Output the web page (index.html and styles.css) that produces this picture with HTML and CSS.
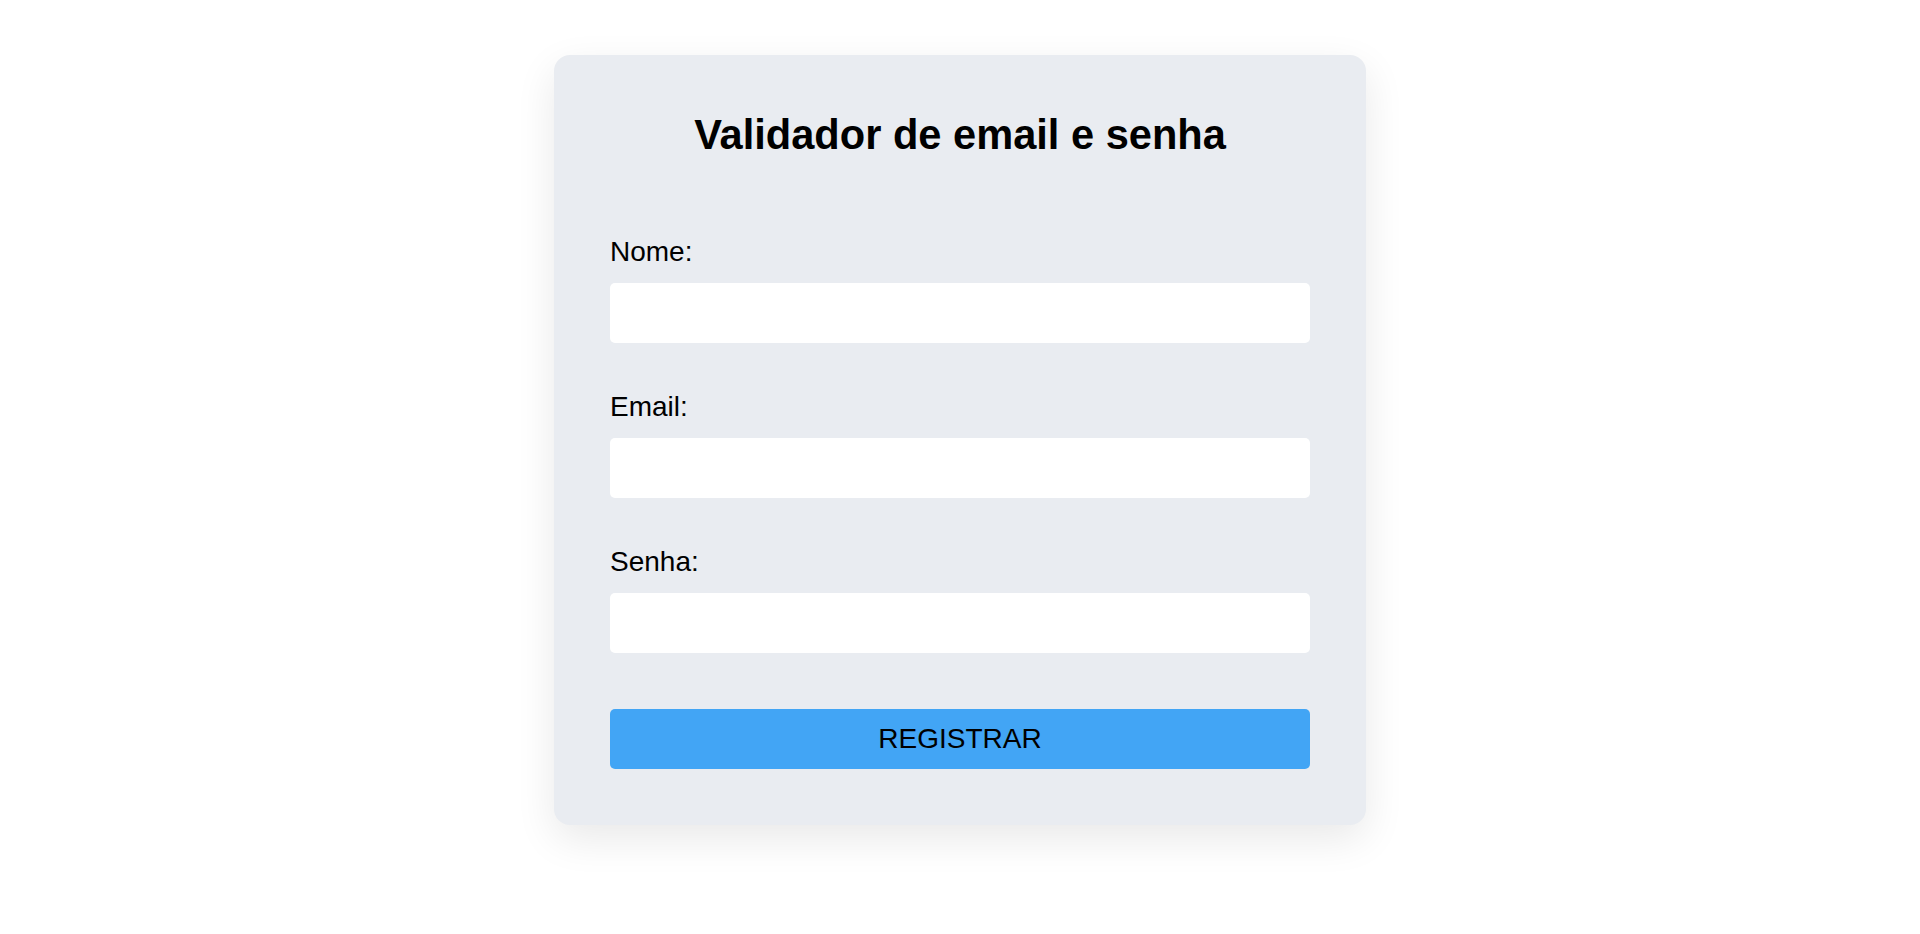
FILE: index.html
```html
<!DOCTYPE html>
<html lang="pt-BR">
<head>
<meta charset="UTF-8">
<title>Validador de email e senha</title>
<link rel="stylesheet" href="styles.css">
</head>
<body>
<main class="card">
  <h1 class="title">Validador de email e senha</h1>
  <form class="form">
    <div class="field">
      <label class="label" for="nome">Nome:</label>
      <input class="input" id="nome" type="text">
    </div>
    <div class="field">
      <label class="label" for="email">Email:</label>
      <input class="input" id="email" type="email">
    </div>
    <div class="field">
      <label class="label" for="senha">Senha:</label>
      <input class="input" id="senha" type="password">
    </div>
    <button class="button" type="button">REGISTRAR</button>
  </form>
</main>
</body>
</html>
```

FILE: styles.css
```css
* { box-sizing: border-box; }
html, body {
  margin: 0;
  padding: 0;
  background: #ffffff;
  font-family: "Liberation Sans", Arial, sans-serif;
  color: #000;
}
body {
  min-height: 100vh;
  padding: 55px 0 60px;
}
.card {
  width: 812px;
  margin: 0 auto;
  padding: 56px;
  background: #e9ecf1;
  border-radius: 16px;
  box-shadow: 0 14px 40px rgba(0, 0, 0, 0.09);
}
.title {
  margin: 0;
  font-size: 41.6px;
  font-weight: bold;
  line-height: normal;
  text-align: center;
}
.form {
  display: flex;
  flex-direction: column;
  margin-top: 77px;
}
.field {
  display: flex;
  flex-direction: column;
  margin-bottom: 48px;
}
.field:last-of-type { margin-bottom: 56px; }
.label {
  font-size: 28px;
  line-height: normal;
  margin-bottom: 15px;
}
.input {
  height: 60px;
  border: none;
  border-radius: 5px;
  background: #ffffff;
  font-size: 28px;
  padding: 0 16px;
  outline: none;
}
.button {
  height: 60px;
  border: none;
  border-radius: 5px;
  background: #42a5f5;
  color: #000;
  font-family: "Liberation Sans", Arial, sans-serif;
  font-size: 28px;
  cursor: pointer;
}
```
